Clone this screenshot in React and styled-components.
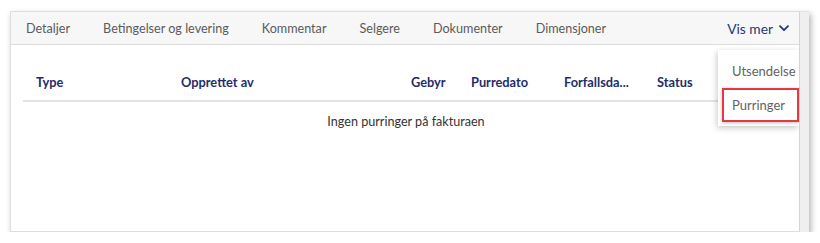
import React from "react";
import styled, { createGlobalStyle } from "styled-components";

const Global = createGlobalStyle`
  html, body { margin: 0; padding: 0; background: #ffffff; }
  body { font-family: "Lato", "Noto Sans", sans-serif; }
  * { box-sizing: border-box; }
`;

const Frame = styled.div`
  margin: 11px 0 0 10px;
  width: 799px;
  height: 221px;
  display: flex;
  box-shadow: 2px 3px 6px rgba(0, 0, 0, 0.3);
  background: #ffffff;
`;

const Panel = styled.div`
  position: relative;
  flex: 1;
  border: 1px solid #dedede;
  border-right-color: #d4d4d4;
  background: #ffffff;
  overflow: hidden;
`;

const Strip = styled.div`
  width: 9px;
  background: #efefef;
  border-top: 1px solid #e2e2e2;
`;

const TabBar = styled.div`
  height: 33px;
  display: flex;
  align-items: center;
  background: #f7f7f7;
  border-bottom: 1px solid #dcdcdc;
`;

const Tab = styled.div`
  padding: 0 16.5px;
  font-size: 12.6px;
  color: #5b5b5b;
  white-space: nowrap;
  &:first-child { padding-left: 15px; }
`;

const More = styled.div`
  margin-left: auto;
  padding-right: 10px;
  display: flex;
  align-items: center;
  gap: 6px;
  font-size: 13.8px;
  color: #263776;
`;

const Table = styled.div`
  margin: 18px 10px 0 12px;
`;

const Row = styled.div`
  display: grid;
  grid-template-columns: 145px 230px 60px 93px 93px 1fr;
  align-items: center;
  height: ${(p) => p.$h}px;
  border-bottom: ${(p) => (p.$line ? "2px solid #e3e3e3" : "none")};
`;

const Head = styled.div`
  padding: 0 13px;
  font-size: 12.8px;
  font-weight: 700;
  color: #1f2d6b;
  white-space: nowrap;
  text-align: ${(p) => (p.$right ? "right" : "left")};
`;

const Empty = styled.div`
  height: 38px;
  display: flex;
  align-items: center;
  justify-content: center;
  font-size: 12.6px;
  color: #333333;
`;

const Menu = styled.div`
  position: absolute;
  top: 38px;
  right: 0;
  width: 81px;
  padding: 4px 0 4px 4px;
  background: #ffffff;
  box-shadow: -1px 2px 6px rgba(0, 0, 0, 0.22);
  display: flex;
  flex-direction: column;
`;

const MenuItem = styled.div`
  height: 34px;
  display: flex;
  align-items: center;
  padding-left: 8px;
  font-size: 13px;
  color: #626262;
  white-space: nowrap;
  border: 2px solid ${(p) => (p.$hl ? "#e8383f" : "transparent")};
  box-shadow: ${(p) => (p.$hl ? "0 1px 3px rgba(0,0,0,0.25)" : "none")};
`;

const tabs = ["Detaljer", "Betingelser og levering", "Kommentar", "Selgere", "Dokumenter", "Dimensjoner"];

export default function App() {
  return (
    <>
      <Global />
      <Frame>
        <Panel>
          <TabBar>
            {tabs.map((t) => (
              <Tab key={t}>{t}</Tab>
            ))}
            <More>
              Vis mer
              <svg width="10" height="7" viewBox="0 0 10 7" fill="none">
                <path d="M1 1.2 5 5.2 9 1.2" stroke="#263776" strokeWidth="1.8" strokeLinecap="round" strokeLinejoin="round" />
              </svg>
            </More>
          </TabBar>
          <Table>
            <Row $h={39} $line>
              <Head>Type</Head>
              <Head>Opprettet av</Head>
              <Head $right>Gebyr</Head>
              <Head>Purredato</Head>
              <Head>Forfallsda...</Head>
              <Head>Status</Head>
            </Row>
            <Empty>Ingen purringer på fakturaen</Empty>
          </Table>
          <Menu>
            <MenuItem>Utsendelse</MenuItem>
            <MenuItem $hl>Purringer</MenuItem>
          </Menu>
        </Panel>
        <Strip />
      </Frame>
    </>
  );
}
